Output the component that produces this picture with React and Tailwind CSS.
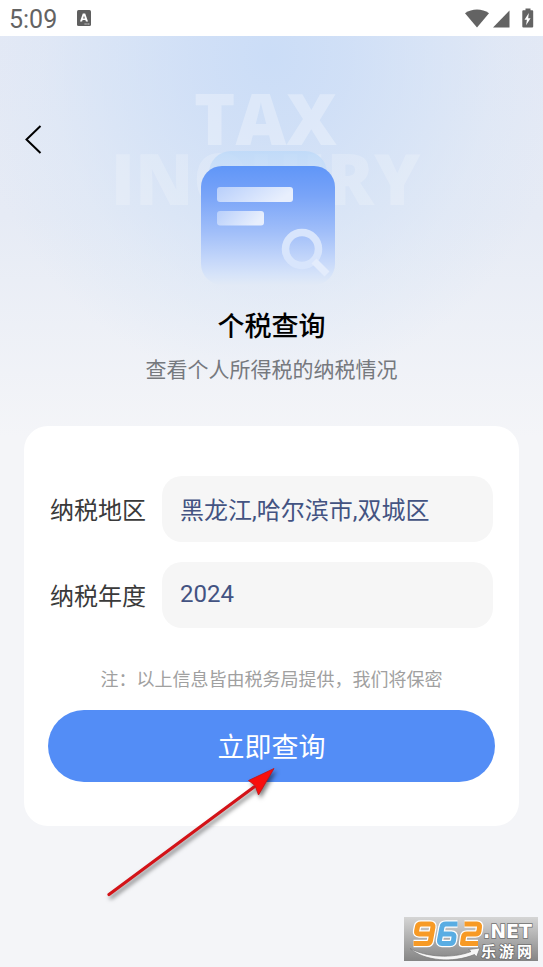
import React from "react";

function StatusBar() {
  return (
    <div className="flex h-9 items-center justify-between bg-white pr-2 pl-[9px] text-[#636363]">
      <div className="flex items-center gap-5">
        <span className="pt-1 text-[25px] leading-8">5:09</span>
        <svg width="14" height="16" viewBox="0 0 14 16" aria-hidden="true">
          <rect width="14" height="16" rx="1.5" fill="#5f5f5f" />
          <path d="M3 11.500 5.800 3.500h2.400l2.800 8H8.900L8.400 10H5.600l-.5 1.500zM6.100 8.500h1.800L7 5.800z" fill="#fff" fillRule="evenodd" />
          <path d="M7.500 14h5" stroke="#d5d5d5" strokeWidth="1" strokeDasharray="1.300 .5" />
        </svg>
      </div>
      <svg width="70" height="20" viewBox="0 0 70 20" fill="#636363" aria-hidden="true">
        <path d="M0 5.200C7 .2 17 .2 24 5.200L12 19.500z" />
        <path d="M44.500 2.500v17H28z" />
        <path d="M60.500.5h5v1.800h1.700q1 0 1 1v15.200q0 1-1 1h-8.900q-1 0-1-1V3.300q0-1 1-1h2.200z" />
        <path d="M63.800 5 59.500 11.800h2.400l-.8 5.500 4.500-7.100h-2.400z" fill="#fff" />
      </svg>
    </div>
  );
}

function TaxIcon() {
  return (
    <svg width="136" height="136" viewBox="0 0 136 136" className="relative" aria-hidden="true">
      <defs>
        <linearGradient id="back" x1="0" y1="0" x2="0" y2="1">
          <stop offset="0" stopColor="#bcd9f9" />
          <stop offset=".2" stopColor="#c9def8" />
          <stop offset="1" stopColor="#dfe9f7" />
        </linearGradient>
        <linearGradient id="front" x1="0" y1="0" x2="0" y2="1">
          <stop offset="0" stopColor="#6096f8" />
          <stop offset=".25" stopColor="#79a4f8" />
          <stop offset=".55" stopColor="#a0bef9" />
          <stop offset=".8" stopColor="#c6d8fa" />
          <stop offset=".92" stopColor="#d7e4f9" />
          <stop offset="1" stopColor="#e2eaf6" />
        </linearGradient>
        <linearGradient id="bar" x1="0" y1="0" x2="1" y2="0.3">
          <stop offset="0" stopColor="#b8cffb" />
          <stop offset="1" stopColor="#e8effd" />
        </linearGradient>
      </defs>
      <rect x="9" y="1" width="118" height="100" rx="22" fill="url(#back)" fillOpacity=".8" />
      <rect x="1" y="16" width="134" height="119" rx="21" fill="url(#front)" />
      <rect x="17" y="37" width="76" height="15" rx="3" fill="url(#bar)" />
      <rect x="17" y="61" width="47" height="14.500" rx="3" fill="url(#bar)" />
      <circle cx="102" cy="99" r="16.500" fill="none" stroke="#d8e5fc" strokeWidth="7.500" />
      <path d="m114 111 13 13" stroke="#e3ecfc" strokeWidth="7" />
    </svg>
  );
}

function Hero() {
  return (
    <header className="relative flex flex-col items-center pt-[114px] pb-10">
      <div
        aria-hidden="true"
        className="absolute inset-x-0 top-[52px] pr-3 text-center font-['Open_Sans',sans-serif] text-[70px] leading-[60px] font-extrabold"
      >
        <div className="text-white/30">TAX</div>
        <div className="text-white/20">INQUIRY</div>
      </div>
      <button type="button" aria-label="返回" className="absolute top-[77px] left-4 p-2">
        <svg width="20" height="36" viewBox="0 0 20 36" fill="none" stroke="#000" strokeWidth="2">
          <path d="M16.500 5 2.500 18.500 16.500 32" />
        </svg>
      </button>
      <div className="pr-2">
        <TaxIcon />
      </div>
      <h1 className="mt-[21px] text-[27px] leading-10 font-medium text-black">个税查询</h1>
      <p className="mt-[7px] text-[21px] leading-8 text-[#76797e]">查看个人所得税的纳税情况</p>
    </header>
  );
}

function Field({ id, label, value }) {
  return (
    <div className="flex items-center gap-4">
      <label htmlFor={id} className="shrink-0 pt-1 text-2xl text-[#3a3a3a]">
        {label}
      </label>
      <input
        id={id}
        readOnly
        defaultValue={value}
        className="h-[66px] w-full min-w-0 flex-1 rounded-[20px] bg-[#f6f6f6] px-[18px] pb-[2px] text-2xl leading-8 text-[#435382] outline-none"
      />
    </div>
  );
}

function QueryCard() {
  return (
    <form
      onSubmit={(e) => e.preventDefault()}
      className="mx-6 rounded-3xl bg-white px-6 pt-[50px] pb-11"
    >
      <div className="flex flex-col gap-5 px-[2px]">
        <Field id="region" label="纳税地区" value="黑龙江,哈尔滨市,双城区" />
        <Field id="year" label="纳税年度" value="2024" />
      </div>
      <p className="mt-[38px] text-center text-lg leading-7 text-[#a0a0a0]">
        注：以上信息皆由税务局提供，我们将保密
      </p>
      <button
        type="submit"
        className="mt-4 h-[72px] w-full rounded-full bg-[#538df6] pt-1 text-[27px] text-white"
      >
        立即查询
      </button>
    </form>
  );
}

function PointerArrow() {
  return (
    <svg
      width="180"
      height="140"
      viewBox="0 0 180 140"
      className="pointer-events-none absolute top-[762px] left-[102px] drop-shadow-[2px_3px_2px_rgba(0,0,0,0.5)]"
      aria-hidden="true"
    >
      <path d="M7 132.500 152 25" stroke="#d31318" strokeWidth="3.200" strokeLinecap="round" />
      <path d="M172 6.500 146.500 18.500l6.500 5 3.500 9.500z" fill="#f90f0c" stroke="#c01116" strokeWidth=".8" />
    </svg>
  );
}

function SiteBadge() {
  return (
    <svg
      width="134"
      height="44"
      viewBox="0 0 134 44"
      className="absolute right-[5px] bottom-[6px]"
      role="img"
      aria-label="962.NET 乐游网"
    >
      <defs>
        <linearGradient id="plate" x1="0" y1="0" x2="0" y2="1">
          <stop offset="0" stopColor="#d5d5d5" />
          <stop offset="1" stopColor="#858585" />
        </linearGradient>
      </defs>
      <rect width="134" height="44" fill="url(#plate)" />
      <path d="M6 31.500C22 40 48 42 67 34.500L64.500 32.500 76 31 72.500 40l-2-2.500C49 46.500 20 44 6 31.500z" fill="#f6f6f6" stroke="#777" strokeWidth=".7" />
      <g fill="none" strokeLinejoin="round">
        <g stroke="#fff" strokeWidth="7.500">
          <path d="M27 17H15Q12 17 12.600 14L13.500 9.500Q14 7 17 7H26Q29.500 7 29 10L26.500 23.500Q26 26.500 23 26.500H9.500" />
          <path d="M53.500 7H42Q38.500 7 38 10L35.500 23Q35 26.500 38 26.500H46Q49 26.500 49.500 23.500L50 20Q50.500 17 47.500 17H38" />
          <path d="M60.500 7H73Q76 7 75.500 10L75 14Q74.500 17 71.500 17H63Q60 17 59.500 20L58.500 26.500H74" />
        </g>
        <path d="M27 17H15Q12 17 12.600 14L13.500 9.500Q14 7 17 7H26Q29.500 7 29 10L26.500 23.500Q26 26.500 23 26.500H9.500" stroke="#f79a25" strokeWidth="5" />
        <path d="M53.500 7H42Q38.500 7 38 10L35.500 23Q35 26.500 38 26.500H46Q49 26.500 49.500 23.500L50 20Q50.500 17 47.500 17H38" stroke="#59ade3" strokeWidth="5" />
        <path d="M60.500 7H73Q76 7 75.500 10L75 14Q74.500 17 71.500 17H63Q60 17 59.500 20L58.500 26.500H74" stroke="#f79a25" strokeWidth="5" />
      </g>
      <g className="font-['DejaVu_Sans','Noto_Sans_CJK_SC',sans-serif] font-bold" fill="#fff" stroke="#707070" strokeWidth="1.500" paintOrder="stroke">
        <text x="79" y="21" fontSize="19">.NET</text>
        <g className="font-['Noto_Sans_CJK_SC',sans-serif]">
          <text x="77" y="40" fontSize="15">乐</text>
          <text x="95" y="40" fontSize="15">游</text>
          <text x="113" y="40" fontSize="15">网</text>
        </g>
      </g>
    </svg>
  );
}

export default function App() {
  return (
    <div className="relative min-h-screen bg-[#f4f5f8] font-[Roboto,'Noto_Sans_CJK_SC',sans-serif]">
      <StatusBar />
      <main className="bg-[radial-gradient(ellipse_300px_330px_at_50%_20px,#cbddf7_0%,#cbddf7cc_25%,#cfe0f799_50%,#d5e4f74d_75%,#d5e4f700_100%),linear-gradient(to_bottom,#e4e9f5_0px,#e6ebf5_180px,#f4f5f8_400px)]">
        <Hero />
        <QueryCard />
      </main>
      <PointerArrow />
      <SiteBadge />
    </div>
  );
}
